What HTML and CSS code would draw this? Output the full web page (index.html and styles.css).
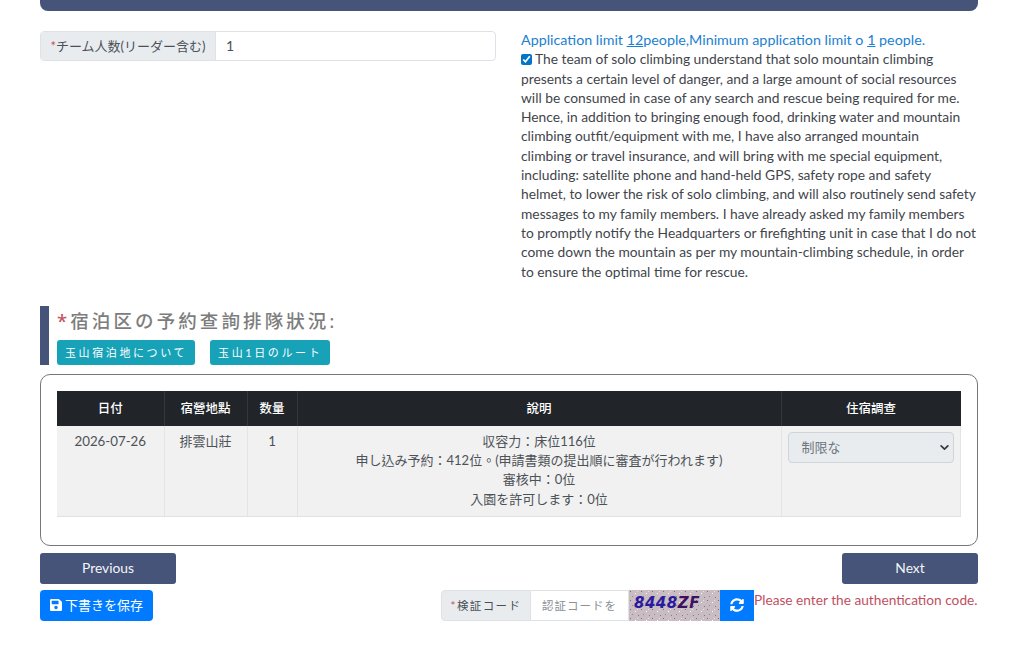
FILE: index.html
```html
<!DOCTYPE html>
<html>
<head>
	<meta charset="UTF-8">
	<title>宿泊区の予約</title>
	<link rel="stylesheet" href="styles.css">
</head>
<body>
	<div class="page">

		<div class="top-bar"></div>

		<div class="apply-row">
			<div class="apply-left">
				<div class="input-group">
					<span class="input-label"><span class="req">*</span>チーム人数(リーダー含む)</span>
					<span class="input-value">1</span>
				</div>
			</div>
			<div class="apply-right">
				<div class="limit-text">Application limit <u>12</u>people,Minimum application limit o <u>1</u> people.</div>
				<label class="solo-text"><input type="checkbox" class="solo-check" checked>The team of solo climbing understand that solo mountain climbing<br>
				presents a certain level of danger, and a large amount of social resources<br>
				will be consumed in case of any search and rescue being required for me.<br>
				Hence, in addition to bringing enough food, drinking water and mountain<br>
				climbing outfit/equipment with me, I have also arranged mountain<br>
				climbing or travel insurance, and will bring with me special equipment,<br>
				including: satellite phone and hand-held GPS, safety rope and safety<br>
				helmet, to lower the risk of solo climbing, and will also routinely send safety<br>
				messages to my family members. I have already asked my family members<br>
				to promptly notify the Headquarters or firefighting unit in case that I do not<br>
				come down the mountain as per my mountain-climbing schedule, in order<br>
				to ensure the optimal time for rescue.</label>
			</div>
		</div>

		<div class="section-head">
			<div class="section-title"><span class="req title-req">*</span>宿泊区の予約查詢排隊狀況:</div>
			<div class="section-links">
				<a class="btn-info">玉山宿泊地について</a>
				<a class="btn-info">玉山1日のルート</a>
			</div>
		</div>

		<div class="table-box">
			<table class="room-table">
				<thead>
					<tr>
						<th class="col-date">日付</th>
						<th class="col-place">宿營地點</th>
						<th class="col-num">数量</th>
						<th class="col-desc">說明</th>
						<th class="col-stay">住宿調查</th>
					</tr>
				</thead>
				<tbody>
					<tr>
						<td class="cell-latin">2026-07-26</td>
						<td>排雲山莊</td>
						<td class="cell-latin">1</td>
						<td>
							収容力：床位116位<br>
							申し込み予約：412位。(申請書類の提出順に審査が行われます)<br>
							審核中：0位<br>
							入園を許可します：0位
						</td>
						<td>
							<div class="stay-select">
								<span>制限な</span>
								<svg class="select-arrow" viewBox="0 0 16 16"><path d="M2 5l6 6 6-6" fill="none" stroke="#343a40" stroke-width="3" stroke-linecap="round" stroke-linejoin="round"/></svg>
							</div>
						</td>
					</tr>
				</tbody>
			</table>
		</div>

		<div class="nav-row">
			<a class="btn-nav">Previous</a>
			<a class="btn-nav">Next</a>
		</div>

		<div class="bottom-row">
			<a class="btn-save">
				<svg class="save-icon" viewBox="0 0 448 512"><path fill="#fff" d="M433.941 129.941l-83.882-83.882A48 48 0 0 0 316.118 32H48C21.49 32 0 53.49 0 80v352c0 26.51 21.49 48 48 48h352c26.51 0 48-21.49 48-48V163.882a48 48 0 0 0-14.059-33.941zM224 416c-35.346 0-64-28.654-64-64 0-35.346 28.654-64 64-64s64 28.654 64 64c0 35.346-28.654 64-64 64zm96-304.52V212c0 6.627-5.373 12-12 12H76c-6.627 0-12-5.373-12-12V108c0-6.627 5.373-12 12-12h228.52c3.183 0 6.235 1.264 8.485 3.515l3.48 3.48A11.996 11.996 0 0 1 320 111.48z"/></svg>
				下書きを保存
			</a>
			<div class="captcha-wrap">
				<div class="captcha-group">
					<span class="captcha-label"><span class="req">*</span>検証コード</span>
					<span class="captcha-input">認証コードを</span>
					<div class="captcha-img">
						<svg class="captcha-noise" width="91" height="31">
							<defs>
								<pattern id="noise" width="11" height="9" patternUnits="userSpaceOnUse">
									<rect x="1" y="1" width="1" height="1" fill="#7d6d7d"/>
									<rect x="6" y="3" width="1" height="1" fill="#fff"/>
									<rect x="3" y="6" width="1" height="1" fill="#8f8a80"/>
									<rect x="9" y="7" width="1" height="1" fill="#6f7f8f"/>
									<rect x="8" y="1" width="1" height="1" fill="#e8e0e4"/>
								</pattern>
							</defs>
							<rect width="91" height="31" fill="url(#noise)"/>
						</svg>
						<span class="captcha-code">8448<span class="captcha-code-end">ZF</span></span>
					</div>
					<a class="btn-refresh">
						<svg class="refresh-icon" viewBox="0 0 512 512"><path fill="#fff" d="M370.72 133.28C339.458 104.008 298.888 87.962 255.848 88c-77.458.068-144.328 53.178-162.791 126.85-1.344 5.363-6.122 9.15-11.651 9.15H24.103c-7.498 0-13.194-6.807-11.807-14.176C33.933 94.924 134.813 8 256 8c66.448 0 126.791 26.136 171.315 68.685L463.03 40.97C478.149 25.851 504 36.559 504 57.941V192c0 13.255-10.745 24-24 24H345.941c-21.382 0-32.09-25.851-16.971-40.971l41.75-41.749zM32 296h134.059c21.382 0 32.09 25.851 16.971 40.971l-41.75 41.75c31.262 29.273 71.835 45.319 114.876 45.28 77.418-.07 144.315-53.144 162.787-126.849 1.344-5.363 6.122-9.15 11.651-9.15h57.304c7.498 0 13.194 6.807 11.807 14.176C478.067 417.076 377.187 504 256 504c-66.448 0-126.791-26.136-171.315-68.685L48.97 471.03C33.851 486.149 8 475.441 8 454.059V320c0-13.255 10.745-24 24-24z"/></svg>
					</a>
				</div>
				<div class="captcha-error">Please enter the authentication code.</div>
			</div>
		</div>

	</div>
</body>
</html>
```

FILE: styles.css
```css
html {
	margin: 0;
}

body {
	margin: 0;
	background: #fff;
	color: #495057;
	font-family: "Lato", "Noto Sans CJK TC", sans-serif;
	font-size: 13.8px;
	line-height: 19.3px;
}

.page {
	height: 645px;
	overflow: hidden;
	padding: 0 46px 0 40px;
}

.top-bar {
	height: 11px;
	background: #46547a;
	border-radius: 0 0 8px 8px;
}

.req {
	color: #c8505f;
}

/* 上段 */
.apply-row {
	display: flex;
	justify-content: space-between;
	padding-top: 20px;
}

.apply-left {
	width: 456px;
}

.apply-right {
	width: 457px;
	margin-top: -1px;
}

.input-group {
	display: flex;
	height: 30px;
	border: 1px solid #dee2e6;
	border-radius: 4px;
	box-sizing: border-box;
	overflow: hidden;
}

.input-label {
	width: 175px;
	background: #e9ecef;
	border-right: 1px solid #dee2e6;
	box-sizing: border-box;
	font-size: 13px;
	line-height: 28px;
	text-align: center;
	white-space: nowrap;
}

.input-value {
	padding-left: 10px;
	font-size: 14px;
	line-height: 28px;
}

.limit-text {
	color: #1b7fd1;
	font-size: 14.3px;
	white-space: nowrap;
}

.solo-text {
	display: block;
	color: #3f454b;
	white-space: nowrap;
}

.solo-check {
	width: 11px;
	height: 11px;
	margin: 0 3px 0 0;
	vertical-align: -1px;
	accent-color: #0075c9;
}

/* 宿泊区 */
.section-head {
	height: 59px;
	margin-top: 25px;
	padding-left: 8px;
	border-left: 9px solid #46547a;
	box-sizing: border-box;
}

.section-title {
	color: #7d7d7d;
	font-size: 18.5px;
	font-weight: 500;
	letter-spacing: 3.1px;
	line-height: 28px;
	padding-top: 1px;
	white-space: nowrap;
}

.title-req {
	font-family: "Noto Sans", sans-serif;
}

.section-links {
	display: flex;
	gap: 15px;
	margin-top: 5px;
}

.btn-info {
	height: 25px;
	padding: 0 8px;
	background: #17a2b8;
	border-radius: 3px;
	color: #fff;
	font-size: 11px;
	letter-spacing: 2.6px;
	line-height: 25px;
	white-space: nowrap;
}

.table-box {
	height: 172px;
	margin-top: 9px;
	padding: 16px 16px 0;
	border: 1px solid #777;
	border-radius: 10px;
	box-sizing: border-box;
}

.room-table {
	width: 904px;
	border-collapse: collapse;
	table-layout: fixed;
}

.room-table th {
	height: 35px;
	padding: 0;
	background: #212529;
	border-right: 1px solid #32383e;
	box-sizing: border-box;
	color: #fff;
	font-size: 12.5px;
	font-weight: 500;
	text-align: center;
}

.room-table th:last-child {
	border-right: none;
}

.room-table td {
	height: 91px;
	padding: 6px 6px 0;
	background: #f1f1f1;
	border-right: 1px solid #e2e4e6;
	border-bottom: 1px solid #dee2e6;
	box-sizing: border-box;
	color: #4d5257;
	font-size: 13px;
	text-align: center;
	vertical-align: top;
}

.room-table td.cell-latin {
	font-size: 13.3px;
}

.col-date {
	width: 107px;
}

.col-place {
	width: 83px;
}

.col-num {
	width: 50px;
}

.col-desc {
	width: 484px;
}

.stay-select {
	display: flex;
	justify-content: space-between;
	align-items: center;
	height: 31px;
	padding: 0 4px 0 13px;
	background: #e9ecef;
	border: 1px solid #ced4da;
	border-radius: 4px;
	box-sizing: border-box;
	color: #6c757d;
	font-size: 13px;
}

.select-arrow {
	width: 9px;
	height: 9px;
}

/* 下のボタン */
.nav-row {
	display: flex;
	justify-content: space-between;
	margin-top: 7px;
}

.btn-nav {
	width: 136px;
	height: 31px;
	background: #46547a;
	border-radius: 3px;
	color: #f4f5f8;
	font-size: 13.8px;
	line-height: 30px;
	text-align: center;
}

.bottom-row {
	display: flex;
	justify-content: space-between;
	margin-top: 6px;
}

.btn-save {
	display: flex;
	align-items: center;
	justify-content: center;
	gap: 3px;
	width: 113px;
	height: 31px;
	background: #007bff;
	border-radius: 4px;
	color: #fff;
	font-size: 13px;
}

.save-icon {
	width: 12px;
	height: 14px;
}

.captcha-wrap {
	display: flex;
}

.captcha-group {
	display: flex;
	height: 31px;
}

.captcha-label {
	width: 90px;
	background: #e9ecef;
	border: 1px solid #dee2e6;
	border-radius: 4px 0 0 4px;
	box-sizing: border-box;
	font-size: 11.5px;
	letter-spacing: 1.4px;
	line-height: 29px;
	text-align: center;
	white-space: nowrap;
}

.captcha-input {
	width: 98px;
	border: 1px solid #dee2e6;
	border-left: none;
	box-sizing: border-box;
	color: #8a9097;
	font-size: 11.5px;
	letter-spacing: 1px;
	line-height: 29px;
	padding-left: 11px;
	white-space: nowrap;
}

.captcha-img {
	position: relative;
	width: 91px;
	height: 31px;
	background: #c9bcc2;
	overflow: hidden;
}

.captcha-noise {
	position: absolute;
	left: 0;
	top: 0;
}

.captcha-code {
	position: absolute;
	left: 5px;
	top: 3px;
	color: #2a1a9e;
	font-family: "DejaVu Sans", sans-serif;
	font-size: 15px;
	font-style: italic;
	font-weight: bold;
	letter-spacing: 0.5px;
	line-height: 20px;
}

.captcha-code-end {
	color: #3d1060;
}

.btn-refresh {
	display: flex;
	align-items: center;
	justify-content: center;
	width: 34px;
	height: 31px;
	background: #007bff;
}

.refresh-icon {
	width: 14px;
	height: 14px;
}

.captcha-error {
	width: 224px;
	color: #c0505f;
	font-size: 13.7px;
	line-height: 20px;
	white-space: nowrap;
}
```
